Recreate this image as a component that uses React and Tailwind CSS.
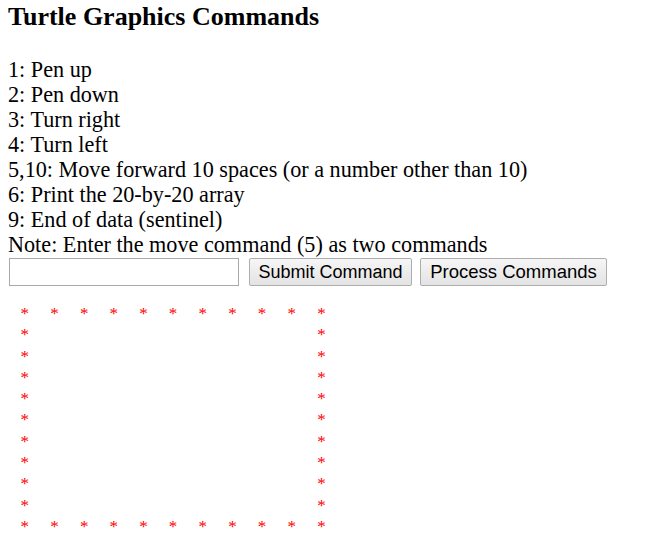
export default function App() {
  const lines = [
    "1: Pen up",
    "2: Pen down",
    "3: Turn right",
    "4: Turn left",
    "5,10: Move forward 10 spaces (or a number other than 10)",
    "6: Print the 20-by-20 array",
    "9: End of data (sentinel)",
    "Note: Enter the move command (5) as two commands",
  ];
  const cells = [];
  for (let r = 0; r < 11; r++) {
    for (let c = 0; c < 11; c++) {
      const on = r === 0 || r === 10 || c === 0 || c === 10;
      cells.push(
        <div key={r * 11 + c} className="flex items-center justify-center h-[21.27px] text-[17px] leading-none text-[#ff0000]">
          {on ? "*" : ""}
        </div>
      );
    }
  }
  return (
    <div className="bg-white w-[665px] h-[540px] overflow-hidden pl-[8px] text-black" style={{ fontFamily: '"Liberation Serif", "Times New Roman", serif' }}>
      <h1 className="text-[26px] font-bold leading-[28px] pt-[3px]">Turtle Graphics Commands</h1>
      <div className="mt-[26px] text-[22.2px] leading-[25px]">
        {lines.map((l) => (
          <div key={l}>{l}</div>
        ))}
      </div>
      <div className="flex items-center mt-[1px]" style={{ fontFamily: '"Liberation Sans", Arial, sans-serif' }}>
        <input type="text" className="w-[230px] h-[28px] ml-[1px] border border-[#a9a9a9] bg-white outline-none" />
        <button className="ml-[10px] w-[163px] h-[28px] border border-[#adadad] rounded-[2px] bg-gradient-to-b from-[#f6f6f6] to-[#e3e3e3] text-[18px] leading-none text-black text-center">
          Submit Command
        </button>
        <button className="ml-[8px] w-[187px] h-[28px] border border-[#adadad] rounded-[2px] bg-gradient-to-b from-[#f6f6f6] to-[#e3e3e3] text-[18.5px] leading-none text-black text-center">
          Process Commands
        </button>
      </div>
      <div className="grid grid-cols-[repeat(11,29.67px)] mt-[17px] ml-[2px]">
        {cells}
      </div>
    </div>
  );
}
